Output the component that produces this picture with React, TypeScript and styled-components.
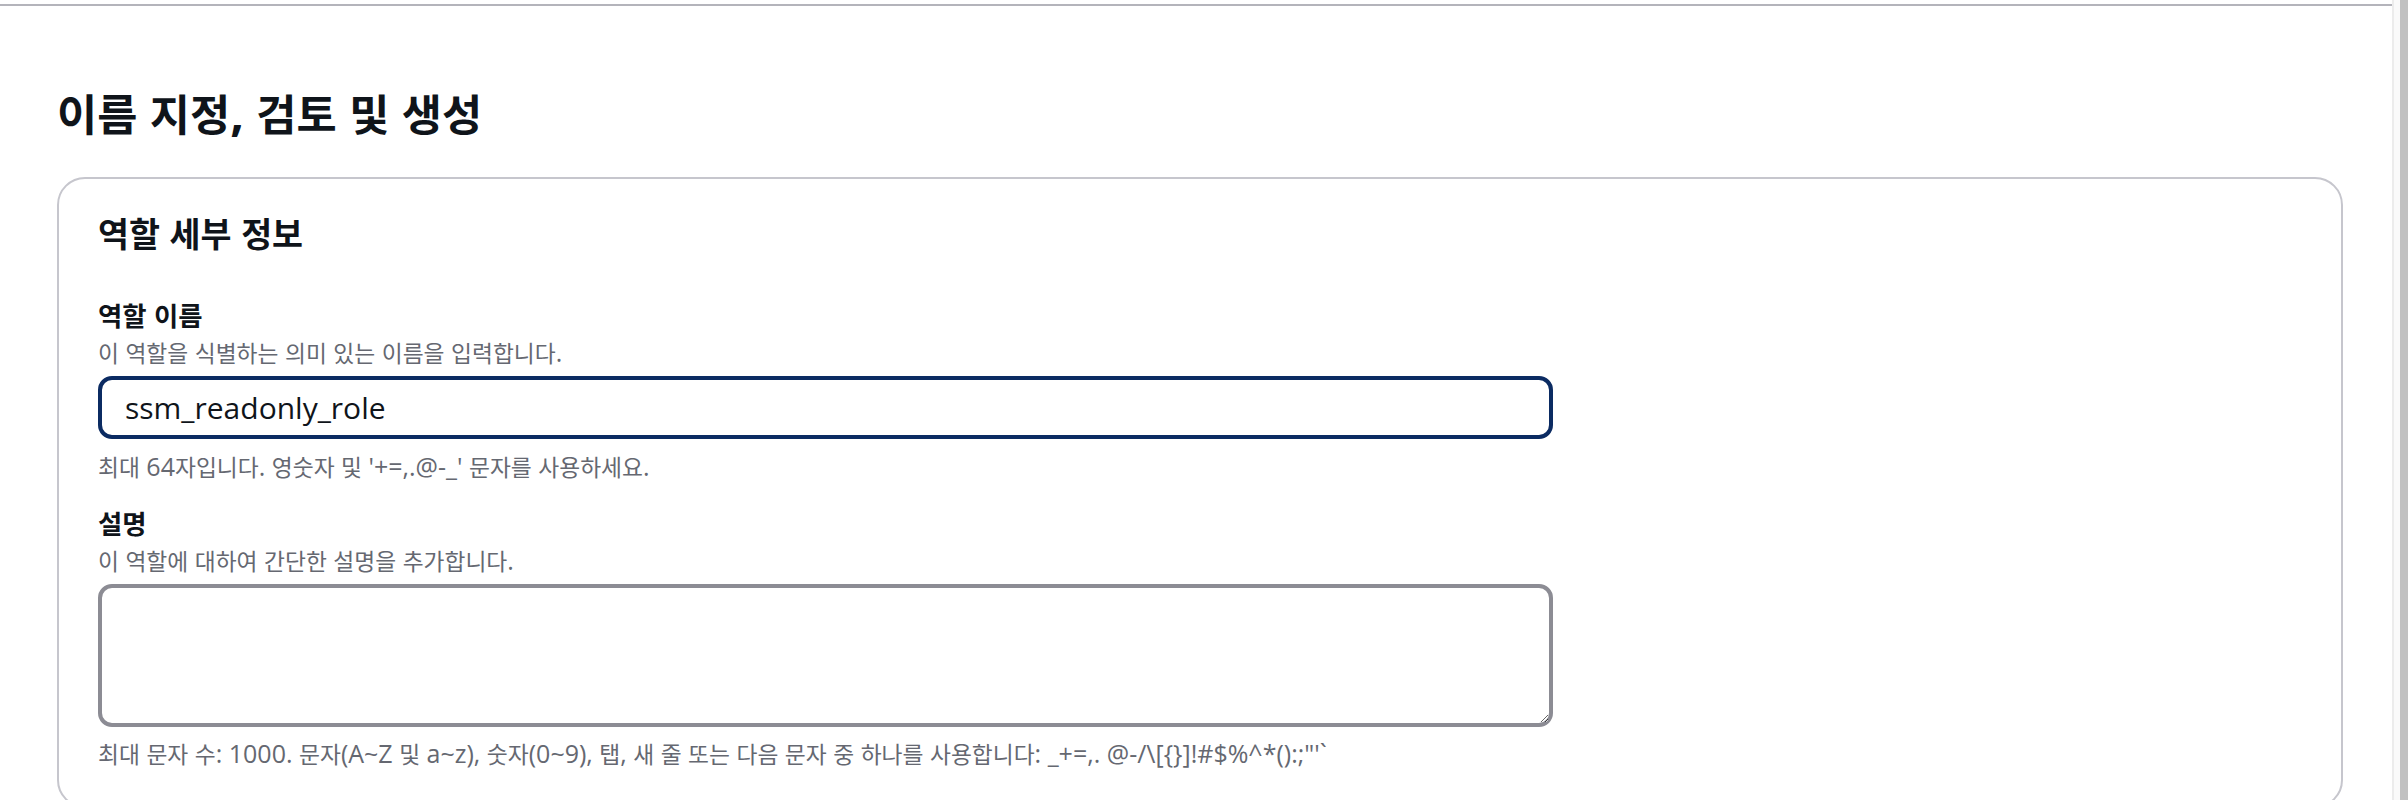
import React from "react";
import styled, { createGlobalStyle } from "styled-components";

const GlobalStyle = createGlobalStyle`
  html, body {
    margin: 0;
    padding: 0;
    background: #ffffff;
  }
  body {
    font-family: "Open Sans", "Noto Sans CJK KR", sans-serif;
    color: #0f141a;
  }
  * {
    box-sizing: border-box;
  }
`;

/* The reference font draws Hangul a little smaller than its Latin glyphs. */
const Hangul = styled.span`
  font-size: 0.91em;
  line-height: 1;
`;

const HANGUL_RUN = /([\u1100-\u11FF\u3130-\u318F\uAC00-\uD7A3]+)/;

function Mixed({ text }: { text: string }) {
  const parts = text.split(HANGUL_RUN);
  return (
    <>
      {parts.map((part, i) =>
        i % 2 === 1 ? <Hangul key={i}>{part}</Hangul> : <React.Fragment key={i}>{part}</React.Fragment>
      )}
    </>
  );
}

const Viewport = styled.div`
  display: flex;
  width: 2408px;
  height: 800px;
  overflow: hidden;
  background: #ffffff;
`;

const Page = styled.main`
  flex: 1;
  min-width: 0;
  padding-top: 4px;
`;

const TopRule = styled.div`
  height: 2px;
  background: #b4b4bb;
`;

const Content = styled.div`
  padding: 0 49px 0 57px;
`;

const PageTitle = styled.h1`
  margin: 81px 0 38px;
  font-size: 48px;
  line-height: 52px;
  font-weight: 700;
  color: #0f141a;
`;

const Card = styled.section`
  border: 2px solid #c6c6cd;
  border-radius: 28px;
  padding: 34px 39px 39px;
`;

const CardTitle = styled.h2`
  margin: 0 0 47px;
  font-size: 37px;
  line-height: 40px;
  font-weight: 700;
  color: #0f141a;
`;

const Field = styled.div<{ $gapTop?: number }>`
  display: flex;
  flex-direction: column;
  margin-top: ${(p) => p.$gapTop ?? 0}px;
`;

const Label = styled.label`
  font-size: 29px;
  line-height: 30px;
  font-weight: 700;
  color: #0f141a;
`;

const Description = styled.div`
  margin-top: 8px;
  font-size: 25px;
  line-height: 28px;
  color: #656871;
`;

const TextInput = styled.input`
  margin-top: 10px;
  width: 1455px;
  height: 63px;
  border: 4px solid #0b2b62;
  border-radius: 14px;
  padding: 0 23px;
  font-family: "Open Sans", "Noto Sans CJK KR", sans-serif;
  font-size: 30px;
  color: #0f141a;
  background: #ffffff;
  outline: none;
`;

const TextArea = styled.textarea`
  margin-top: 10px;
  width: 1455px;
  height: 143px;
  border: 4px solid #8c8c94;
  border-radius: 14px;
  padding: 12px 23px;
  font-family: "Open Sans", "Noto Sans CJK KR", sans-serif;
  font-size: 30px;
  color: #0f141a;
  background: #ffffff;
  outline: none;
  resize: vertical;
`;

const Constraint = styled.div<{ $gap: number }>`
  margin-top: ${(p) => p.$gap}px;
  font-size: 25px;
  line-height: 28px;
  color: #656871;
`;

const ScrollTrack = styled.div`
  flex: none;
  width: 16px;
  height: 100%;
  border-left: 2px solid #ececec;
  background: #fafafa;
  display: flex;
  justify-content: flex-end;
`;

const ScrollThumb = styled.div`
  width: 8px;
  height: 100%;
  background: #c1c1c1;
`;

const FOOTER_HINT =
  "최대 문자 수: 1000. 문자(A~Z 및 a~z), 숫자(0~9), 탭, 새 줄 또는 다음 문자 중 하나를 사용합니다: _+=,. @-/\\[{}]!#$%^*():;\"'`";

export default function App() {
  return (
    <>
      <GlobalStyle />
      <Viewport>
        <Page>
          <TopRule />
          <Content>
            <PageTitle>
              <Mixed text="이름 지정, 검토 및 생성" />
            </PageTitle>
            <Card>
              <CardTitle>
                <Mixed text="역할 세부 정보" />
              </CardTitle>
              <Field>
                <Label htmlFor="role-name">
                  <Mixed text="역할 이름" />
                </Label>
                <Description>
                  <Mixed text="이 역할을 식별하는 의미 있는 이름을 입력합니다." />
                </Description>
                <TextInput id="role-name" defaultValue="ssm_readonly_role" />
                <Constraint $gap={13}>
                  <Mixed text="최대 64자입니다. 영숫자 및 '+=,.@-_' 문자를 사용하세요." />
                </Constraint>
              </Field>
              <Field $gapTop={28}>
                <Label htmlFor="role-desc">
                  <Mixed text="설명" />
                </Label>
                <Description>
                  <Mixed text="이 역할에 대하여 간단한 설명을 추가합니다." />
                </Description>
                <TextArea id="role-desc" />
                <Constraint $gap={12}>
                  <Mixed text={FOOTER_HINT} />
                </Constraint>
              </Field>
            </Card>
          </Content>
        </Page>
        <ScrollTrack>
          <ScrollThumb />
        </ScrollTrack>
      </Viewport>
    </>
  );
}
